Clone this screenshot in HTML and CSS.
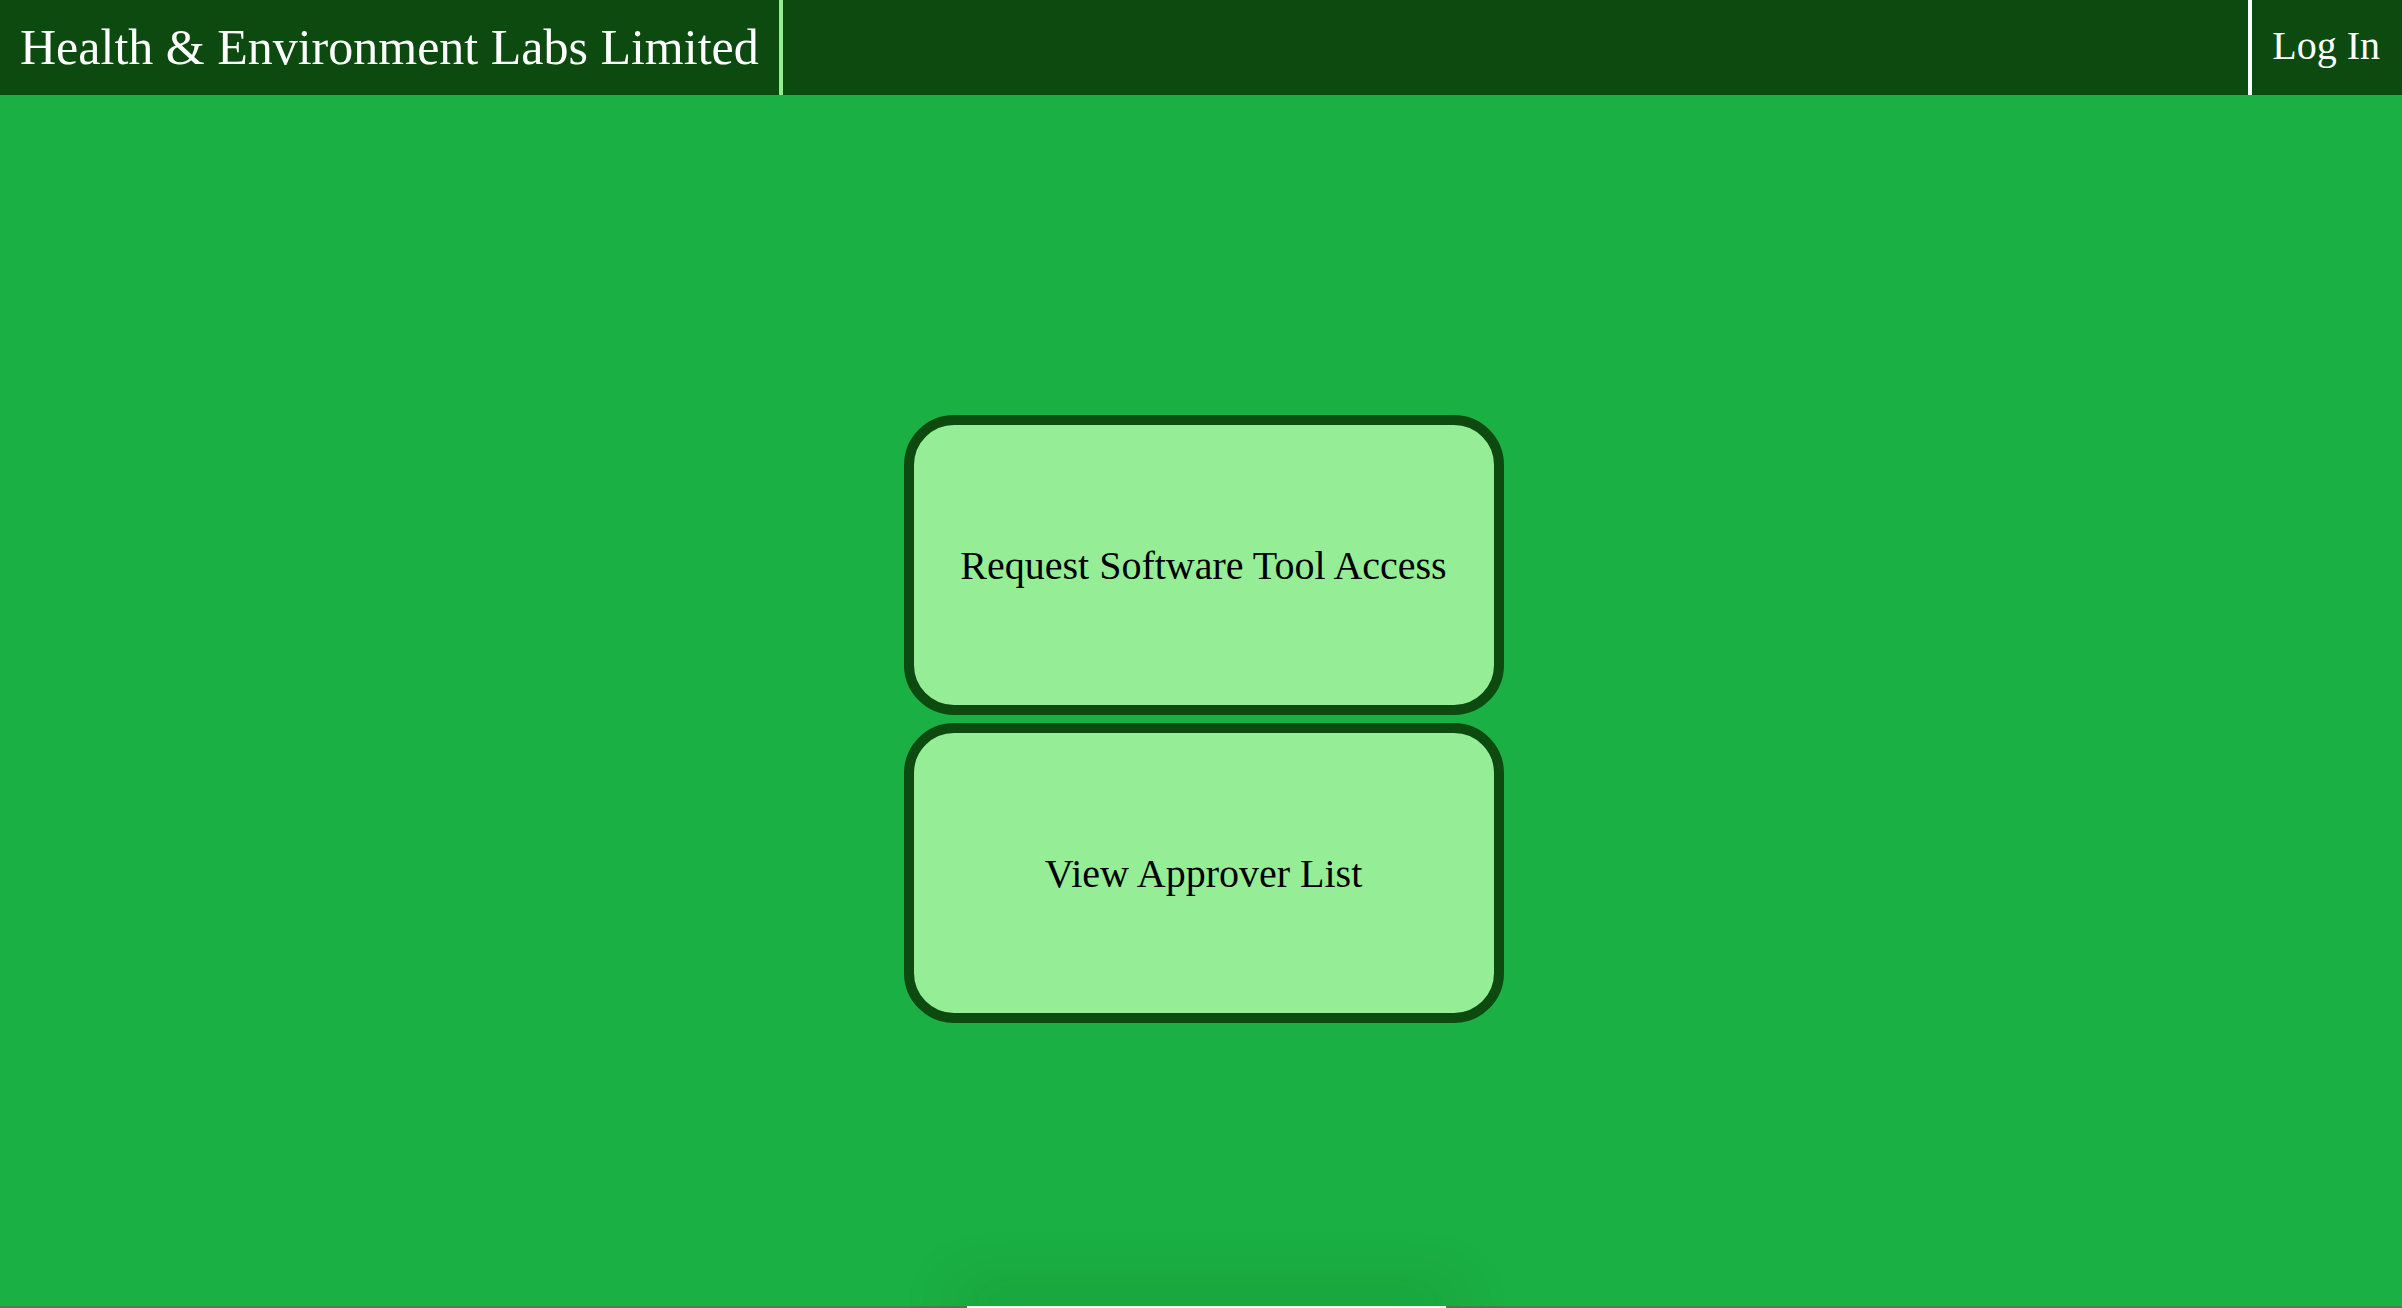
FILE: index.html
```html
<!DOCTYPE html>
<html lang="en">
<head>
<meta charset="utf-8">
<title>Health &amp; Environment Labs Limited</title>
<link rel="stylesheet" href="styles.css">
</head>
<body>
<div class="page">
  <header class="topbar">
    <div class="brand">Health &amp; Environment Labs Limited</div>
    <div class="spacer"></div>
    <a class="login" href="#">Log In</a>
  </header>
  <main class="main">
    <div class="actions">
      <a class="action-card" href="#">Request Software Tool Access</a>
      <a class="action-card" href="#">View Approver List</a>
    </div>
  </main>
  <footer class="footer">
    <div class="footer-card"></div>
  </footer>
</div>
</body>
</html>
```

FILE: styles.css
```css
html, body {
  margin: 0;
  padding: 0;
  height: 100%;
  overflow: hidden;
}

body {
  font-family: "Liberation Serif", "Times New Roman", serif;
  background: #1bb043;
}

.page {
  display: flex;
  flex-direction: column;
  height: 1308px;
  overflow: hidden;
}

.topbar {
  display: flex;
  align-items: stretch;
  height: 95px;
  background: #0c4a10;
  color: #ffffff;
  flex: none;
}

.brand {
  display: flex;
  align-items: center;
  padding: 0 20px 2px 20px;
  font-size: 50px;
  border-right: 4px solid #90ee90;
  white-space: nowrap;
}

.spacer {
  flex: 1;
}

.login {
  display: flex;
  align-items: center;
  padding: 0 22px 4px 20px;
  font-size: 40px;
  color: #ffffff;
  text-decoration: none;
  border-left: 4px solid #ffffff;
  white-space: nowrap;
}

.main {
  flex: 1;
  display: flex;
  flex-direction: column;
  align-items: center;
  padding-top: 320px;
  box-sizing: border-box;
  min-height: 0;
}

.actions {
  display: flex;
  flex-direction: column;
  gap: 8px;
  margin-left: 5px;
}

.action-card {
  display: flex;
  align-items: center;
  justify-content: center;
  width: 600px;
  height: 300px;
  box-sizing: border-box;
  border: 10px solid #0c4a10;
  border-radius: 50px;
  background: #95ee95;
  color: #000000;
  font-size: 40px;
  text-decoration: none;
}

.footer {
  flex: none;
  height: 2px;
  background: #4f7d55;
  display: flex;
  justify-content: center;
  align-items: flex-start;
}

.footer-card {
  width: 479px;
  height: 2px;
  margin-left: 10px;
  background: #f2fbf2;
  box-shadow: 0 -4px 60px 10px rgba(0, 40, 0, 0.22);
}
```
